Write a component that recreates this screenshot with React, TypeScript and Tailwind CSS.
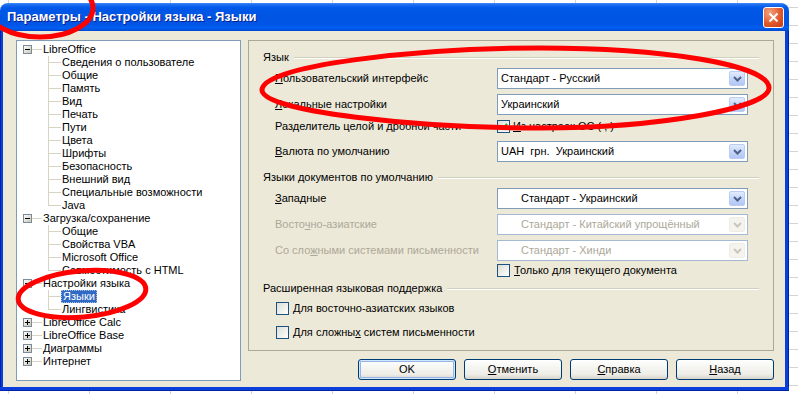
import React from "react";

const TREE: { label: string; children?: string[] }[] = [
  {
    label: "LibreOffice",
    children: [
      "Сведения о пользователе",
      "Общие",
      "Память",
      "Вид",
      "Печать",
      "Пути",
      "Цвета",
      "Шрифты",
      "Безопасность",
      "Внешний вид",
      "Специальные возможности",
      "Java",
    ],
  },
  {
    label: "Загрузка/сохранение",
    children: ["Общие", "Свойства VBA", "Microsoft Office", "Совместимость с HTML"],
  },
  { label: "Настройки языка", children: ["Языки", "Лингвистика"] },
  { label: "LibreOffice Calc" },
  { label: "LibreOffice Base" },
  { label: "Диаграммы" },
  { label: "Интернет" },
];

function Expander({ open }: { open: boolean }) {
  return (
    <svg width="9" height="9" viewBox="0 0 9 9" className="shrink-0">
      <defs>
        <linearGradient id="expfill" x1="0" y1="0" x2="1" y2="1">
          <stop offset="0" stopColor="#ffffff" />
          <stop offset="1" stopColor="#c8c4b2" />
        </linearGradient>
      </defs>
      <rect x="0.5" y="0.5" width="8" height="8" fill="url(#expfill)" stroke="#7a8a99" />
      <path d="M2 4.5h5" stroke="#000" />
      {!open && <path d="M4.5 2v5" stroke="#000" />}
    </svg>
  );
}

function TreeView() {
  return (
    <div className="h-[341px] w-[225px] shrink-0 border border-[#7F9DB9] bg-white pt-[2px]">
      {TREE.map((node) => (
        <div key={node.label}>
          <div className="flex h-[13px] items-center pl-[6px]">
            <Expander open={!!node.children} />
            <div className="h-px w-[10px] bg-[#D8D4C4]" />
            <span className="pl-[1px] whitespace-nowrap">{node.label}</span>
          </div>
          {node.children?.map((c, i) => {
            const last = i === node.children!.length - 1;
            const selected = node.label === "Настройки языка" && c === "Языки";
            return (
              <div key={c + i} className="flex h-[13px] pl-[31px]">
                <div className={`h-[13px] w-[13px] shrink-0 ${last ? "" : "border-l border-[#D8D4C4]"}`}>
                  <div className={`h-[7px] border-b border-[#D8D4C4] ${last ? "border-l" : ""}`} />
                </div>
                <span
                  className={`whitespace-nowrap px-[1px] ${
                    selected ? "border border-dotted border-[#A9BEE4] bg-[#316AC5] text-white leading-[11px]" : ""
                  }`}
                >
                  {c}
                </span>
              </div>
            );
          })}
        </div>
      ))}
    </div>
  );
}

function Chevron({ disabled }: { disabled?: boolean }) {
  return (
    <svg width="9" height="6" viewBox="0 0 9 6">
      <path d="M1 1l3.5 3.5L8 1" fill="none" stroke={disabled ? "#C9C7BA" : "#4D6185"} strokeWidth="2" />
    </svg>
  );
}

function Combo({ value, indent, disabled }: { value: string; indent?: boolean; disabled?: boolean }) {
  return (
    <div
      className={`flex h-[21px] w-[251px] shrink-0 items-center border bg-white ${
        disabled ? "border-[#A5B9D5]" : "border-[#7F9DB9]"
      }`}
    >
      <span className={`flex-1 whitespace-pre ${indent ? "pl-[23px]" : "pl-[3px]"} ${disabled ? "text-[#ACA899]" : ""}`}>
        {value}
      </span>
      <div
        className={`mr-[2px] flex h-[15px] w-[16px] items-center justify-center rounded-[2px] border ${
          disabled
            ? "border-[#EEEDE5] bg-[#F4F3EE]"
            : "border-[#B9CCF3] [background-image:linear-gradient(to_bottom,#E2EBFD,#C6D6FB_50%,#B3C7F5)]"
        }`}
      >
        <Chevron disabled={disabled} />
      </div>
    </div>
  );
}

function Check({ checked }: { checked?: boolean }) {
  return (
    <div className="flex h-[13px] w-[13px] shrink-0 items-center justify-center border border-[#1C5180] [background-image:linear-gradient(135deg,#DCDCD7,#FFFFFF)]">
      {checked && (
        <svg width="9" height="9" viewBox="0 0 9 9">
          <path d="M1 4.2l2.5 2.6L8 1.8" fill="none" stroke="#21A121" strokeWidth="2" />
        </svg>
      )}
    </div>
  );
}

function GroupHeader({ title }: { title: string }) {
  return (
    <div className="flex h-[13px] items-center gap-[5px]">
      <span className="whitespace-nowrap">{title}</span>
      <div className="h-[2px] flex-1 border-t border-b border-t-[#D0D0BF] border-b-white" />
    </div>
  );
}

function Row({ label, children, muted }: { label: React.ReactNode; children: React.ReactNode; muted?: boolean }) {
  return (
    <div className="flex items-center pl-[12px]">
      <span className={`w-[222px] shrink-0 whitespace-nowrap ${muted ? "text-[#ACA899]" : ""}`}>{label}</span>
      {children}
    </div>
  );
}

function XPButton({ children, def }: { children: React.ReactNode; def?: boolean }) {
  return (
    <button
      className={`flex h-[21px] w-[98px] items-center justify-center rounded-[3px] border border-[#003C74] [background-image:linear-gradient(to_bottom,#FFFFFF,#F6F6F3_35%,#EEEDE7_75%,#D9D4C9)] ${
        def ? "shadow-[inset_0_0_0_1px_#CEE7FF,inset_0_0_0_2px_#98B5E8]" : ""
      }`}
    >
      {children}
    </button>
  );
}

export default function App() {
  return (
    <div className="relative h-[394px] w-[798px] overflow-hidden bg-white pt-[3px] text-[11px] leading-[13px] text-black [font-family:'Liberation_Sans',Arial,sans-serif] [background-image:linear-gradient(#D4D4D4_1px,transparent_1px),linear-gradient(90deg,#D4D4D4_1px,transparent_1px)] [background-size:81px_18px] [background-position:8px_7px]">
      <div className="flex w-[789px] flex-col">
        {/* title bar */}
        <div className="flex h-[28px] items-center justify-between rounded-t-[8px] pl-[7px] pr-[5px] [background-image:linear-gradient(to_bottom,#3D8AF7_0px,#1A6AF0_2px,#0058E8_5px,#0054E3_14px,#0055E6_22px,#0060F2_25px,#0047D0_28px)]">
          <span className="whitespace-nowrap text-[13px] leading-[16px] font-bold text-white [text-shadow:1px_1px_#0A1E8A]">
            Параметры - Настройки языка - Языки
          </span>
          <div className="flex h-[21px] w-[21px] items-center justify-center rounded-[3px] border border-white [background-image:radial-gradient(circle_at_30%_25%,#F3A482,#E2582C_55%,#C43C15)]">
            <svg width="11" height="11" viewBox="0 0 11 11">
              <path d="M1.5 1.5l8 8M9.5 1.5l-8 8" stroke="#fff" strokeWidth="2" />
            </svg>
          </div>
        </div>

        <div className="flex">
          <div className="w-[3px] border-l border-[#0022A8] bg-[#0B3FDC]" />
          <div className="flex h-[356px] flex-1 gap-[7px] bg-[#ECE9D8] pl-[13px] pt-[9px]">
            <TreeView />

            <div className="flex w-[526px] flex-col">
              <div className="flex h-[311px] flex-col border border-[#ACA899] px-[14px] pt-[10px]">
                <GroupHeader title="Язык" />
                <div className="mt-[4px]">
                  <Row label={<><u>П</u>ользовательский интерфейс</>}>
                    <Combo value="Стандарт - Русский" />
                  </Row>
                </div>
                <div className="mt-[5px]">
                  <Row label={<><u>Л</u>окальные настройки</>}>
                    <Combo value="Украинский" />
                  </Row>
                </div>
                <div className="mt-[5px]">
                  <Row label="Разделитель целой и дробной части">
                    <div className="flex items-center gap-[3px]">
                      <Check checked />
                      <span className="whitespace-nowrap"><u>И</u>з настроек ОС ( , )</span>
                    </div>
                  </Row>
                </div>
                <div className="mt-[8px]">
                  <Row label={<><u>В</u>алюта по умолчанию</>}>
                    <Combo value="UAH  грн.  Украинский" />
                  </Row>
                </div>

                <div className="mt-[9px]">
                  <GroupHeader title="Языки документов по умолчанию" />
                </div>
                <div className="mt-[4px]">
                  <Row label={<><u>З</u>ападные</>}>
                    <Combo value="Стандарт - Украинский" indent />
                  </Row>
                </div>
                <div className="mt-[5px]">
                  <Row muted label={<>Восто<u>ч</u>но-азиатские</>}>
                    <Combo value="Стандарт - Китайский упрощённый" indent disabled />
                  </Row>
                </div>
                <div className="mt-[5px]">
                  <Row muted label={<>Со сло<u>ж</u>ными системами письменности</>}>
                    <Combo value="Стандарт - Хинди" indent disabled />
                  </Row>
                </div>
                <div className="mt-[3px] flex items-center gap-[4px] pl-[234px]">
                  <Check />
                  <span className="whitespace-nowrap"><u>Т</u>олько для текущего документа</span>
                </div>

                <div className="mt-[5px]">
                  <GroupHeader title="Расширенная языковая поддержка" />
                </div>
                <div className="mt-[7px] flex items-center gap-[4px] pl-[13px]">
                  <Check />
                  <span className="whitespace-nowrap"><u>Д</u>ля восточно-азиатских языков</span>
                </div>
                <div className="mt-[11px] flex items-center gap-[4px] pl-[13px]">
                  <Check />
                  <span className="whitespace-nowrap">Для сложны<u>х</u> систем письменности</span>
                </div>
              </div>

              <div className="mt-[8px] flex justify-end gap-2">
                <XPButton def>OK</XPButton>
                <XPButton><u>О</u>тменить</XPButton>
                <XPButton><u>С</u>правка</XPButton>
                <XPButton><u>Н</u>азад</XPButton>
              </div>
            </div>
          </div>
          <div className="w-[4px] border-r border-[#0022A8] bg-[#0B3FDC]" />
        </div>
        <div className="h-[4px] border-b border-[#0022A8] bg-[#0B3FDC]" />
      </div>

      {/* red marker annotations */}
      <svg className="pointer-events-none absolute left-0 top-0" width="798" height="394" viewBox="0 0 798 394">
        <g fill="none" stroke="#FF0000" strokeWidth="5">
          <ellipse cx="40" cy="8" rx="53" ry="29" />
          <path d="M262 90 C262 65 420 48 540 48 C660 48 769 64 769 88 C769 108 660 128 540 128 C420 128 262 112 262 90 Z" />
          <ellipse cx="82" cy="294" rx="64" ry="23" transform="rotate(-5 82 294)" />
        </g>
      </svg>
    </div>
  );
}
